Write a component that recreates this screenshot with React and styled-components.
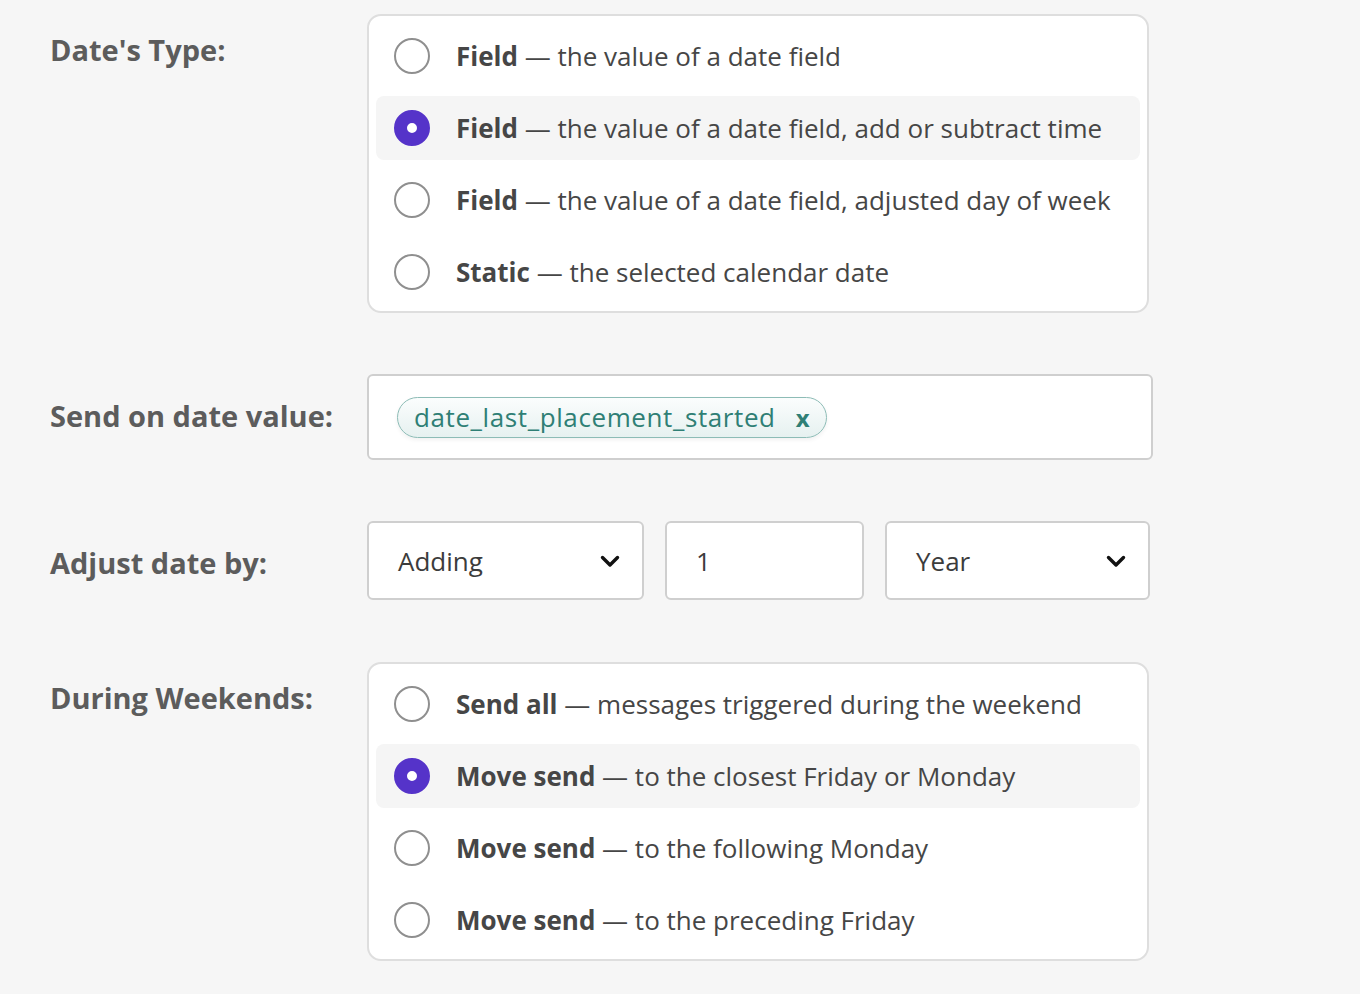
import React, { useState } from 'react';
import styled, { createGlobalStyle } from 'styled-components';

const GlobalStyle = createGlobalStyle`
  body {
    margin: 0;
    background: #f6f6f6;
    font-family: "Open Sans", "Lato", sans-serif;
    color: #444;
  }
`

const Page = styled.div`
  padding: 14px 0 0 50px;
  display: flex;
  flex-direction: column;
`

const Section = styled.div`
  display: grid;
  grid-template-columns: 317px auto;
  align-items: ${p => (p.$center ? 'center' : 'start')};
  margin-bottom: ${p => p.$gap || 0}px;
`

const Label = styled.div`
  font-size: 29px;
  font-weight: 700;
  color: #5c5c5c;
  padding-top: ${p => (p.$center ? '0' : '16px')};
  margin-top: ${p => p.$shift || 0}px;
`

const Card = styled.div`
  width: 782px;
  box-sizing: border-box;
  background: #fff;
  border: 2px solid #dedede;
  border-radius: 14px;
  padding: 8px 7px 7px;
  display: flex;
  flex-direction: column;
  gap: 8px;
`

const Option = styled.label`
  display: flex;
  align-items: center;
  gap: 26px;
  height: 64px;
  padding-left: 18px;
  border-radius: 8px;
  background: ${p => (p.$active ? '#f5f5f5' : 'transparent')};
  cursor: pointer;
  font-size: 26px;
  color: #464646;
  white-space: nowrap;
  b {
    font-weight: 700;
  }
`

const Radio = styled.span`
  width: 36px;
  height: 36px;
  box-sizing: border-box;
  border-radius: 50%;
  flex-shrink: 0;
  background: #fff;
  border: ${p => (p.$checked ? '13px solid #5533c9' : '2px solid #8f8f8f')};
`

const TagBox = styled.div`
  width: 786px;
  height: 86px;
  box-sizing: border-box;
  background: #fff;
  border: 2px solid #cfcfcf;
  border-radius: 6px;
  display: flex;
  align-items: center;
  padding-left: 28px;
`

const Chip = styled.span`
  display: inline-flex;
  align-items: center;
  gap: 20px;
  height: 41px;
  box-sizing: border-box;
  padding: 0 16px 0 16px;
  border-radius: 21px;
  border: 1.5px solid #8dbcb6;
  background: linear-gradient(#fbfdfd, #e6f1f0);
  box-shadow: 0 2px 4px rgba(0, 0, 0, 0.06);
  color: #2f7f75;
  font-size: 26px;
  letter-spacing: 0.6px;
`

const ChipX = styled.span`
  font-weight: 700;
  font-size: 24px;
  letter-spacing: 0;
`

const Controls = styled.div`
  display: flex;
  gap: 21px;
`

const Field = styled.div`
  width: ${p => p.$w}px;
  height: 79px;
  box-sizing: border-box;
  background: #fff;
  border: 2px solid #cfcfcf;
  border-radius: 6px;
  display: flex;
  align-items: center;
  justify-content: space-between;
  padding: 0 22px 0 29px;
  font-size: 26px;
  color: #3c3c3c;
`

const Chevron = () => (
  <svg width="20" height="14" viewBox="0 0 20 14">
    <path d="M2.5 3.5 L10 11 L17.5 3.5" fill="none" stroke="#111" strokeWidth="3.4" strokeLinecap="round" strokeLinejoin="round" />
  </svg>
)

const dateTypes = [
  ['Field', 'the value of a date field'],
  ['Field', 'the value of a date field, add or subtract time'],
  ['Field', 'the value of a date field, adjusted day of week'],
  ['Static', 'the selected calendar date'],
]

const weekends = [
  ['Send all', 'messages triggered during the weekend'],
  ['Move send', 'to the closest Friday or Monday'],
  ['Move send', 'to the following Monday'],
  ['Move send', 'to the preceding Friday'],
]

const RadioCard = ({ items, value, onChange }) => (
  <Card>
    {items.map(([bold, rest], i) => (
      <Option key={i} $active={value === i} onClick={() => onChange(i)}>
        <Radio $checked={value === i} />
        <span><b>{bold}</b> — {rest}</span>
      </Option>
    ))}
  </Card>
)

const App = () => {
  const [dateType, setDateType] = useState(1)
  const [weekend, setWeekend] = useState(1)

  return (
    <>
      <GlobalStyle />
      <Page>
        <Section $gap={61}>
          <Label>Date's Type:</Label>
          <RadioCard items={dateTypes} value={dateType} onChange={setDateType} />
        </Section>
        <Section $center $gap={61}>
          <Label $center $shift={-4}>Send on date value:</Label>
          <TagBox>
            <Chip>date_last_placement_started <ChipX>x</ChipX></Chip>
          </TagBox>
        </Section>
        <Section $center $gap={62}>
          <Label $center $shift={4}>Adjust date by:</Label>
          <Controls>
            <Field $w={277}>Adding <Chevron /></Field>
            <Field $w={199}>1</Field>
            <Field $w={265}>Year <Chevron /></Field>
          </Controls>
        </Section>
        <Section>
          <Label>During Weekends:</Label>
          <RadioCard items={weekends} value={weekend} onChange={setWeekend} />
        </Section>
      </Page>
    </>
  )
}

export default App
